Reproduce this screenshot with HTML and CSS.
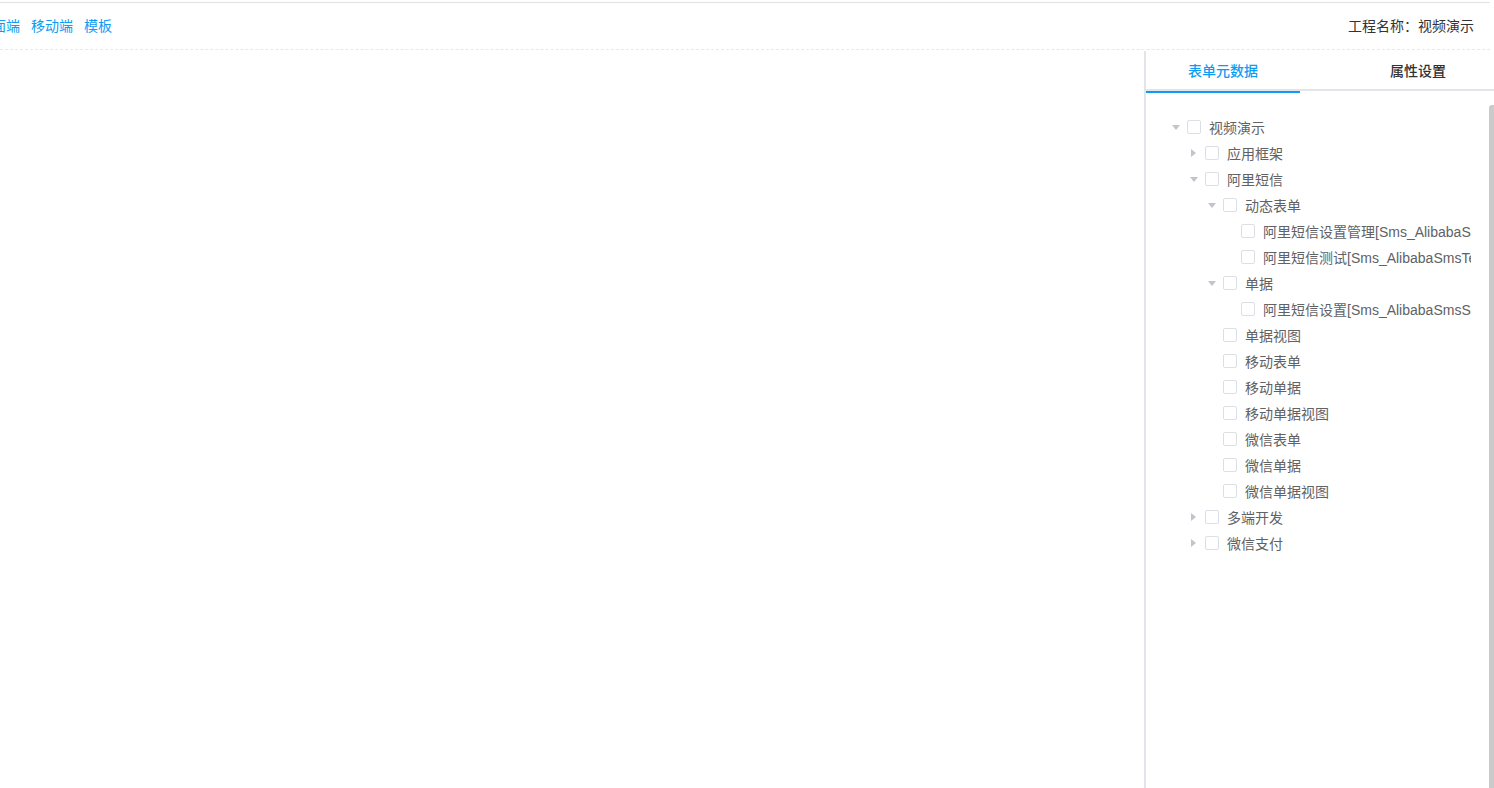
FILE: index.html
```html
<!DOCTYPE html>
<html lang="zh-CN">
<head>
    <meta charset="UTF-8">
    <title>表单设计</title>
    <link rel="stylesheet" href="styles.css">
</head>
<body>
    <div class="page">
        <div class="top-bar">
            <div class="nav-links">
                <a class="nav-link first">桌面端</a>
                <a class="nav-link">移动端</a>
                <a class="nav-link">模板</a>
            </div>
            <div class="project-name">工程名称：视频演示</div>
        </div>

        <div class="workspace">
            <div class="canvas"></div>

            <div class="side-panel">
                <div class="tabs">
                    <div class="tab active">表单元数据</div>
                    <div class="tab second">属性设置</div>
                </div>

                <div class="tree">
                    <div class="node lv1"><span class="arrow down"></span><span class="check"></span><span class="label">视频演示</span></div>
                    <div class="node lv2"><span class="arrow right"></span><span class="check"></span><span class="label">应用框架</span></div>
                    <div class="node lv2"><span class="arrow down"></span><span class="check"></span><span class="label">阿里短信</span></div>
                    <div class="node lv3"><span class="arrow down"></span><span class="check"></span><span class="label">动态表单</span></div>
                    <div class="node lv4"><span class="arrow"></span><span class="check"></span><span class="label">阿里短信设置管理[Sms_AlibabaSmsSettingManage]</span></div>
                    <div class="node lv4"><span class="arrow"></span><span class="check"></span><span class="label">阿里短信测试[Sms_AlibabaSmsTest]</span></div>
                    <div class="node lv3"><span class="arrow down"></span><span class="check"></span><span class="label">单据</span></div>
                    <div class="node lv4"><span class="arrow"></span><span class="check"></span><span class="label">阿里短信设置[Sms_AlibabaSmsSetting]</span></div>
                    <div class="node lv3"><span class="arrow"></span><span class="check"></span><span class="label">单据视图</span></div>
                    <div class="node lv3"><span class="arrow"></span><span class="check"></span><span class="label">移动表单</span></div>
                    <div class="node lv3"><span class="arrow"></span><span class="check"></span><span class="label">移动单据</span></div>
                    <div class="node lv3"><span class="arrow"></span><span class="check"></span><span class="label">移动单据视图</span></div>
                    <div class="node lv3"><span class="arrow"></span><span class="check"></span><span class="label">微信表单</span></div>
                    <div class="node lv3"><span class="arrow"></span><span class="check"></span><span class="label">微信单据</span></div>
                    <div class="node lv3"><span class="arrow"></span><span class="check"></span><span class="label">微信单据视图</span></div>
                    <div class="node lv2"><span class="arrow right"></span><span class="check"></span><span class="label">多端开发</span></div>
                    <div class="node lv2"><span class="arrow right"></span><span class="check"></span><span class="label">微信支付</span></div>
                </div>

                <div class="scroll-thumb"></div>
            </div>
        </div>
    </div>
</body>
</html>
```

FILE: styles.css
```css
:root {
    --blue: #0e9cf3;
    --text: #606266;
    --dark: #303133;
    --line: #e3e5eb;
}

* {
    margin: 0;
    padding: 0;
    box-sizing: border-box;
}

html, body {
    height: 100%;
    overflow: hidden;
}

body {
    font-family: "Liberation Sans", "Noto Sans CJK SC", sans-serif;
    font-size: 14px;
    color: var(--text);
    background: #fff;
}

.page {
    height: 100%;
    display: flex;
    flex-direction: column;
    padding-top: 2px;
}

.top-bar {
    height: 48px;
    margin: 0 4px 0 0;
    border-top: 1px solid #e2e2e2;
    border-bottom: 1px dashed #e8e9ee;
    display: flex;
    align-items: center;
    justify-content: space-between;
    padding: 0 16px 3px 0;
}

.nav-links {
    display: flex;
    gap: 11px;
    margin-left: -22px;
}

.nav-link {
    color: var(--blue);
    cursor: pointer;
}

.project-name {
    color: #333;
}

.workspace {
    flex: 1;
    display: flex;
    min-height: 0;
}

.canvas {
    flex: 1;
}

.side-panel {
    width: 350px;
    position: relative;
    border-left: 2px solid var(--line);
    margin-top: 1px;
}

.tabs {
    display: flex;
    height: 40px;
    border-bottom: 2px solid var(--line);
}

.tab {
    width: 154px;
    text-align: center;
    line-height: 40px;
    color: var(--dark);
    font-weight: 500;
    cursor: pointer;
}

.tab.active {
    color: var(--blue);
    box-shadow: inset 0 -2px 0 var(--blue);
    margin-bottom: -2px;
    height: 42px;
}

.tab.second {
    flex: 1;
    padding-left: 42px;
}

.tree {
    padding: 23px 0 0 17px;
    margin-right: 23px;
    overflow: hidden;
}

.node {
    height: 26px;
    display: flex;
    align-items: center;
    white-space: nowrap;
}

.lv2 { padding-left: 18px; }
.lv3 { padding-left: 36px; }
.lv4 { padding-left: 54px; }

.arrow {
    width: 24px;
    height: 26px;
    flex: none;
    position: relative;
}

.arrow.down::after,
.arrow.right::after {
    content: "";
    position: absolute;
    width: 0;
    height: 0;
}

.arrow.down::after {
    left: 9px;
    top: 11px;
    border-left: 4px solid transparent;
    border-right: 4px solid transparent;
    border-top: 5px solid #c0c4cc;
}

.arrow.right::after {
    left: 10px;
    top: 9px;
    border-top: 4px solid transparent;
    border-bottom: 4px solid transparent;
    border-left: 5px solid #c0c4cc;
}

.check {
    width: 14px;
    height: 14px;
    flex: none;
    border: 1px solid #dcdfe6;
    border-radius: 2px;
    background: #fff;
    margin-right: 8px;
}

.label {
    color: var(--text);
}

.scroll-thumb {
    position: absolute;
    right: 0;
    top: 54px;
    bottom: 0;
    width: 5px;
    background: #cacaca;
    border-radius: 3px 0 0 0;
}
```
